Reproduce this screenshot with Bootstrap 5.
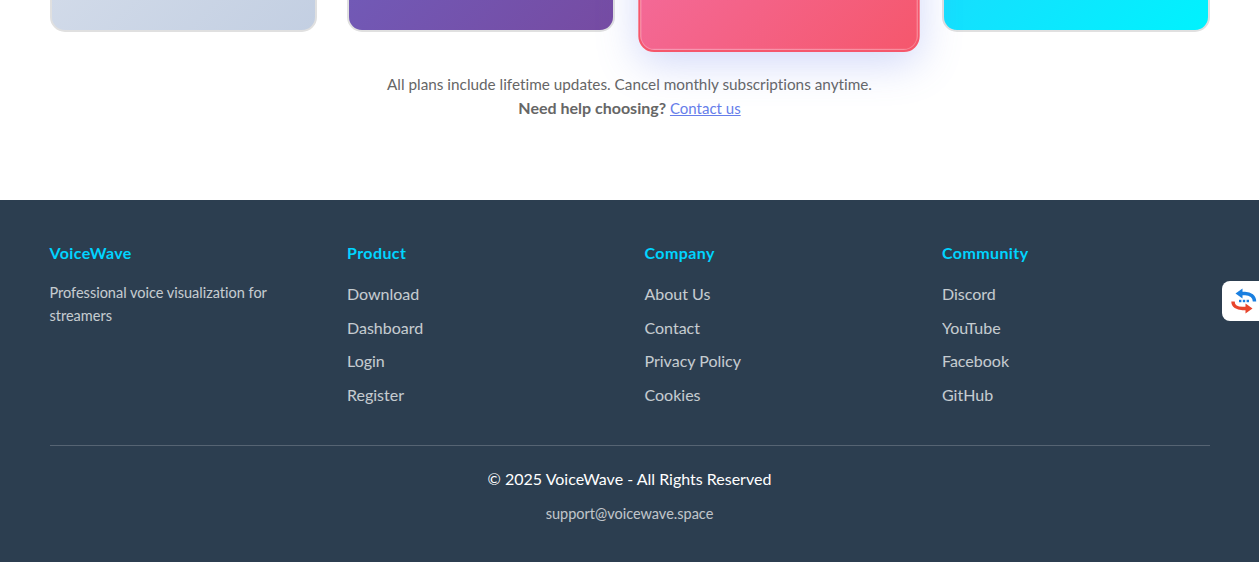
<!DOCTYPE html>
<html lang="en">
  <head>
    <meta charset="UTF-8" />
    <meta name="viewport" content="width=device-width, initial-scale=1.0" />
    <link href="https://cdn.jsdelivr.net/npm/bootstrap@5.3.3/dist/css/bootstrap.min.css" rel="stylesheet" />
    <script src="https://cdn.jsdelivr.net/npm/bootstrap@5.3.3/dist/js/bootstrap.bundle.min.js"></script>
    <title>VoiceWave</title>
    <style>
      html, body { height: 562px; overflow: hidden; }
      body { font-family: Lato, "Open Sans", sans-serif; background: #fff; font-variant-ligatures: none; }
      .wrap-1160 { width: 1160px; margin: 0 auto; }
      .plans-area { height: 200px; display: flow-root; }
      .plan-grid, .foot-grid { display: grid; grid-template-columns: repeat(4, 1fr); gap: 30px; }
      .plan-grid { margin-top: -768px; }
      .plan-box { height: 800px; border: 2px solid #e0e0e0; border-radius: 15px; }
      .plan-free { background: linear-gradient(135deg, #f5f7fa, #c3cfe2); }
      .plan-pro { background: linear-gradient(135deg, #667eea, #764ba2); }
      .plan-team { background: linear-gradient(135deg, #f093fb, #f5576c); border-color: #f5576c; transform: scale(1.05); box-shadow: 0 10px 40px rgba(102, 126, 234, .3), inset 0 0 0 1px rgba(255, 255, 255, .25); }
      .plan-life { background: linear-gradient(135deg, #4facfe, #00f2fe); }
      .plan-note { margin-top: 40px; font-size: 15.3px; line-height: 24px; color: #666; }
      .plan-note strong { font-size: 16px; }
      .plan-note a { color: #667eea; font-size: 15px; }
      .site-foot { height: 362px; background: #2c3e50; padding-top: 42px; }
      .foot-grid { height: 203px; }
      .foot-title { font-size: 16px; letter-spacing: .4px; line-height: 21px; font-weight: 700; color: #00d4ff; margin-bottom: 20px; }
      .foot-text { font-size: 14.5px; line-height: 23px; color: #ecf0f1; opacity: .8; margin: -2px 0 0; }
      .foot-links li { font-size: 16px; line-height: 21px; margin-bottom: 12.6px; }
      .foot-links a { color: #ecf0f1; opacity: .8; text-decoration: none; }
      .foot-base { border-top: 1px solid rgba(255, 255, 255, .2); padding-top: 22px; text-align: center; color: #fff; }
      .foot-copy { font-size: 16px; line-height: 22px; margin-bottom: 14px; }
      .foot-mail { font-size: 14.5px; line-height: 20px; opacity: .7; margin: 0; }
      .side-widget { position: fixed; right: 0; top: 281px; width: 37px; height: 40px; padding-left: 6px; background: #fff; border-radius: 8px 0 0 8px; }
    </style>
  </head>
  <body>
    <section class="plans-area">
      <div class="wrap-1160">
        <div class="plan-grid">
          <div class="plan-box plan-free"></div>
          <div class="plan-box plan-pro"></div>
          <div class="plan-box plan-team"></div>
          <div class="plan-box plan-life"></div>
        </div>
        <div class="plan-note text-center">
          All plans include lifetime updates. Cancel monthly subscriptions anytime.<br />
          <strong>Need help choosing?</strong> <a href="#">Contact us</a>
        </div>
      </div>
    </section>
    <footer class="site-foot">
      <div class="wrap-1160">
        <div class="foot-grid">
          <div>
            <div class="foot-title">VoiceWave</div>
            <p class="foot-text">Professional voice visualization for streamers</p>
          </div>
          <div>
            <div class="foot-title">Product</div>
            <ul class="list-unstyled foot-links m-0">
              <li><a href="#">Download</a></li>
              <li><a href="#">Dashboard</a></li>
              <li><a href="#">Login</a></li>
              <li><a href="#">Register</a></li>
            </ul>
          </div>
          <div>
            <div class="foot-title">Company</div>
            <ul class="list-unstyled foot-links m-0">
              <li><a href="#">About Us</a></li>
              <li><a href="#">Contact</a></li>
              <li><a href="#">Privacy Policy</a></li>
              <li><a href="#">Cookies</a></li>
            </ul>
          </div>
          <div>
            <div class="foot-title">Community</div>
            <ul class="list-unstyled foot-links m-0">
              <li><a href="#">Discord</a></li>
              <li><a href="#">YouTube</a></li>
              <li><a href="#">Facebook</a></li>
              <li><a href="#">GitHub</a></li>
            </ul>
          </div>
        </div>
        <div class="foot-base">
          <p class="foot-copy">© 2025 VoiceWave - All Rights Reserved</p>
          <p class="foot-mail">support@voicewave.space</p>
        </div>
      </div>
    </footer>
    <div class="side-widget d-flex align-items-center justify-content-center">
      <svg width="28" height="28" viewBox="0 0 28 28">
        <path d="M24.500 14.500 C24.500 9.500 20.500 6.500 15 6.500 H11" fill="none" stroke="#1a7fe0" stroke-width="3.400" />
        <path d="M12.500 1.500 L5.500 6.500 L12.500 11.500 Z" fill="#1a7fe0" />
        <path d="M3 14.500 C3 19 7 21.500 12.500 21.500 H17" fill="none" stroke="#e8452c" stroke-width="3.400" />
        <path d="M15.500 16.500 L22.500 21.500 L15.500 26.500 Z" fill="#e8452c" />
        <rect x="9" y="12.800" width="2.400" height="2.400" fill="#1a7fe0" />
        <rect x="12.800" y="12.800" width="2.400" height="2.400" fill="#1a7fe0" />
        <rect x="16.600" y="12.800" width="2.400" height="2.400" fill="#1a7fe0" />
      </svg>
    </div>
  </body>
</html>
